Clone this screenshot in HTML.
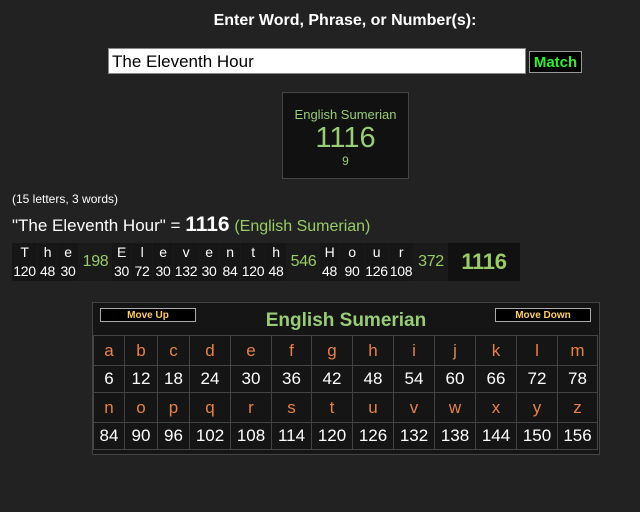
<!DOCTYPE html>
<html><head><style>
body{margin:0;background:#222;width:640px;height:512px;overflow:hidden;font-family:"Liberation Sans",Arial,sans-serif;color:#fff;position:relative}
.a{position:absolute}
.bd{display:flex;position:absolute;left:12px;top:243px;height:38px;background:#1a1a1a}
.bd div{text-align:center;font-size:14px;line-height:19px;letter-spacing:-0.3px}
.bd .c{background:#161616;margin-right:1px}
.bd .s{color:#9c6;font-size:16px;line-height:38px}
.ct{position:absolute;left:92px;top:302px;width:506px;height:151px;background:#151515;border:1px solid #444}
.ct table{position:absolute;left:0;top:32px;border-collapse:collapse}
.ct td{border:1px solid #444;text-align:center;font-size:17px;padding:0}
.l td{color:#e8804a;height:29px}
.n td{color:#fff;height:26px}
.btn{position:absolute;top:5px;width:94px;height:12px;background:#000;border:1px solid #aaa;color:#fc6;font-size:10px;font-weight:bold;text-align:center;line-height:13px}
</style></head><body>
<div class="a" style="left:0;width:690px;top:12px;text-align:center;font-weight:bold;font-size:16px">Enter Word, Phrase, or Number(s):</div>
<div class="a" style="left:108px;top:48px;width:413px;height:24px;background:#fff;border:1px solid #888;color:#000;font-size:17px;line-height:26px;padding-left:3px">The Eleventh Hour</div>
<div class="a" style="left:529px;top:51px;width:51px;height:20px;background:#000;border:1px solid #999;color:#3e3;font-weight:bold;font-size:15px;text-align:center;line-height:21px">Match</div>
<div class="a" style="left:282px;top:92px;width:125px;height:85px;background:#111;border:1px solid #444;text-align:center;color:#9c7">
<div style="font-size:13px;margin-top:14px">English Sumerian</div>
<div style="font-size:29px;line-height:32px">1116</div>
<div style="font-size:12px">9</div></div>
<div class="a" style="left:12px;top:192px;font-size:12px">(15 letters, 3 words)</div>
<div class="a" style="left:12px;top:213px;font-size:17px">"The Eleventh Hour" = <b style="font-size:21px">1116</b> <span style="color:#9c6;font-size:16px">(English Sumerian)</span></div>
<div class="bd">
<div class="c" style="width:25px">T<br>120</div><div class="c" style="width:19px">h<br>48</div><div class="c" style="width:20px">e<br>30</div><div class="s" style="width:33px">198</div>
<div class="c" style="width:19px">E<br>30</div><div class="c" style="width:20px">l<br>72</div><div class="c" style="width:20px">e<br>30</div><div class="c" style="width:24px">v<br>132</div><div class="c" style="width:20px">e<br>30</div><div class="c" style="width:20px">n<br>84</div><div class="c" style="width:24px">t<br>120</div><div class="c" style="width:20px">h<br>48</div><div class="s" style="width:33px">546</div>
<div class="c" style="width:19px">H<br>48</div><div class="c" style="width:24px">o<br>90</div><div class="c" style="width:23px">u<br>126</div><div class="c" style="width:24px">r<br>108</div><div class="s" style="width:34px">372</div>
<div style="width:72px;background:#111;color:#9c6;font-weight:bold;font-size:22px;line-height:38px">1116</div>
</div>
<div class="ct">
<div class="btn" style="left:7px">Move Up</div>
<div class="btn" style="left:402px">Move Down</div>
<div class="a" style="left:0;width:506px;top:7px;text-align:center;color:#9c7;font-weight:bold;font-size:19px">English Sumerian</div>
<table>
<colgroup><col style="width:31px"><col style="width:33px"><col style="width:32px"><col style="width:41px"><col style="width:41px"><col style="width:40px"><col style="width:41px"><col style="width:41px"><col style="width:41px"><col style="width:41px"><col style="width:41px"><col style="width:41px"><col style="width:40px"></colgroup>
<tr class="l"><td>a</td><td>b</td><td>c</td><td>d</td><td>e</td><td>f</td><td>g</td><td>h</td><td>i</td><td>j</td><td>k</td><td>l</td><td>m</td></tr>
<tr class="n"><td>6</td><td>12</td><td>18</td><td>24</td><td>30</td><td>36</td><td>42</td><td>48</td><td>54</td><td>60</td><td>66</td><td>72</td><td>78</td></tr>
<tr class="l"><td>n</td><td>o</td><td>p</td><td>q</td><td>r</td><td>s</td><td>t</td><td>u</td><td>v</td><td>w</td><td>x</td><td>y</td><td>z</td></tr>
<tr class="n"><td>84</td><td>90</td><td>96</td><td>102</td><td>108</td><td>114</td><td>120</td><td>126</td><td>132</td><td>138</td><td>144</td><td>150</td><td>156</td></tr>
</table></div>
</body></html>
